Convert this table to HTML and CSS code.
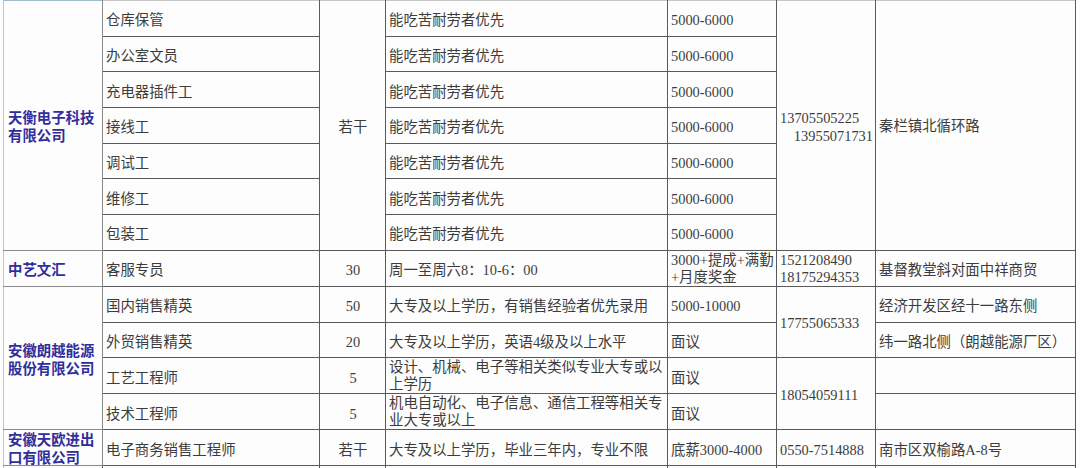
FILE: index.html
```html
<!DOCTYPE html>
<html lang="zh-CN">
<head>
<meta charset="utf-8">
<title>招聘信息表</title>
<link rel="stylesheet" href="styles.css">
</head>
<body>
<div class="sheet">
<table class="jobs">
<colgroup>
<col class="c-company"><col class="c-pos"><col class="c-num"><col class="c-req"><col class="c-pay"><col class="c-tel"><col class="c-addr">
</colgroup>
<tbody>
<tr class="first">
<td class="company" rowspan="7">天衡电子科技有限公司</td>
<td>仓库保管</td>
<td class="num" rowspan="7">若干</td>
<td>能吃苦耐劳者优先</td>
<td>5000-6000</td>
<td class="tel" rowspan="7"><span class="l">13705505225</span><span class="r">13955071731</span></td>
<td class="span" rowspan="7">秦栏镇北循环路</td>
</tr>
<tr><td>办公室文员</td><td>能吃苦耐劳者优先</td><td>5000-6000</td></tr>
<tr><td>充电器插件工</td><td>能吃苦耐劳者优先</td><td>5000-6000</td></tr>
<tr><td>接线工</td><td>能吃苦耐劳者优先</td><td>5000-6000</td></tr>
<tr><td>调试工</td><td>能吃苦耐劳者优先</td><td>5000-6000</td></tr>
<tr><td>维修工</td><td>能吃苦耐劳者优先</td><td>5000-6000</td></tr>
<tr><td>包装工</td><td>能吃苦耐劳者优先</td><td>5000-6000</td></tr>
<tr>
<td class="company">中艺文汇</td>
<td>客服专员</td>
<td class="num">30</td>
<td>周一至周六8：10-6：00</td>
<td class="wrap"><div class="clip">3000+提成+满勤<br>+月度奖金</div></td>
<td class="wrap"><div class="clip">1521208490<br>18175294353</div></td>
<td>基督教堂斜对面中祥商贸</td>
</tr>
<tr>
<td class="company" rowspan="4">安徽朗越能源股份有限公司</td>
<td>国内销售精英</td>
<td class="num">50</td>
<td>大专及以上学历，有销售经验者优先录用</td>
<td>5000-10000</td>
<td class="span" rowspan="2">17755065333</td>
<td>经济开发区经十一路东侧</td>
</tr>
<tr>
<td>外贸销售精英</td>
<td class="num">20</td>
<td>大专及以上学历，英语4级及以上水平</td>
<td>面议</td>
<td>纬一路北侧（朗越能源厂区）</td>
</tr>
<tr>
<td>工艺工程师</td>
<td class="num">5</td>
<td class="wrap"><div class="clip">设计、机械、电子等相关类似专业大专或以上学历</div></td>
<td>面议</td>
<td class="span" rowspan="2">18054059111</td>
<td></td>
</tr>
<tr>
<td>技术工程师</td>
<td class="num">5</td>
<td class="wrap"><div class="clip">机电自动化、电子信息、通信工程等相关专业大专或以上</div></td>
<td>面议</td>
<td></td>
</tr>
<tr>
<td class="company wrap"><div class="clip top">安徽天欧进出口有限公司</div></td>
<td>电子商务销售工程师</td>
<td class="num">若干</td>
<td>大专及以上学历，毕业三年内，专业不限</td>
<td>底薪3000-4000</td>
<td>0550-7514888</td>
<td>南市区双榆路A-8号</td>
</tr>
<tr class="last"><td></td><td></td><td></td><td></td><td></td><td></td><td></td></tr>
</tbody>
</table>
</div>
</body>
</html>
```
FILE: styles.css
```css
html, body {
  margin: 0;
  padding: 0;
  background: #fdfdfd;
}

.sheet {
  padding-left: 3px;
  width: 1080px;
  box-sizing: border-box;
  overflow: hidden;
}

.jobs {
  border-collapse: collapse;
  table-layout: fixed;
  width: 1073px;
  font-family: "Liberation Serif", "Noto Sans CJK SC", serif;
  font-size: 14.4px;
  color: #3c3c3c;
}

.c-company { width: 99px; }
.c-pos { width: 217px; }
.c-num { width: 66px; }
.c-req { width: 282px; }
.c-pay { width: 109px; }
.c-tel { width: 99px; }
.c-addr { width: 200px; }

.jobs tr {
  height: 35.7px;
}

.jobs td {
  border: 1px solid #5a5a5a;
  padding: 5px 2px 0 3px;
  vertical-align: middle;
  line-height: 17px;
  white-space: normal;
  overflow: hidden;
}

.jobs td.span {
  padding-top: 3px;
}

.jobs td:first-child {
  border-left-color: #c4c4c4;
}

.jobs tr.first td {
  border-top-color: #c6c6c6;
}

.jobs tr.first td.company {
  border-top-color: #9fbccd;
}

.jobs td.company {
  padding-top: 3px;
  padding-left: 4px;
  color: #2f2e9c;
  font-weight: bold;
  line-height: 18px;
  border-color: #8a8a8a;
  border-left-color: #c4c4c4;
}

.jobs td.num {
  text-align: center;
}

.jobs td.tel {
  padding-top: 3px;
  line-height: 18px;
}

.tel .l,
.tel .r {
  display: block;
}

.tel .r {
  text-align: right;
}

.jobs td.wrap {
  padding-top: 1px;
}

.clip {
  max-height: 34px;
  overflow: hidden;
}

.clip.top {
  line-height: 18px;
}

.jobs tr.last {
  height: 6px;
}
```
